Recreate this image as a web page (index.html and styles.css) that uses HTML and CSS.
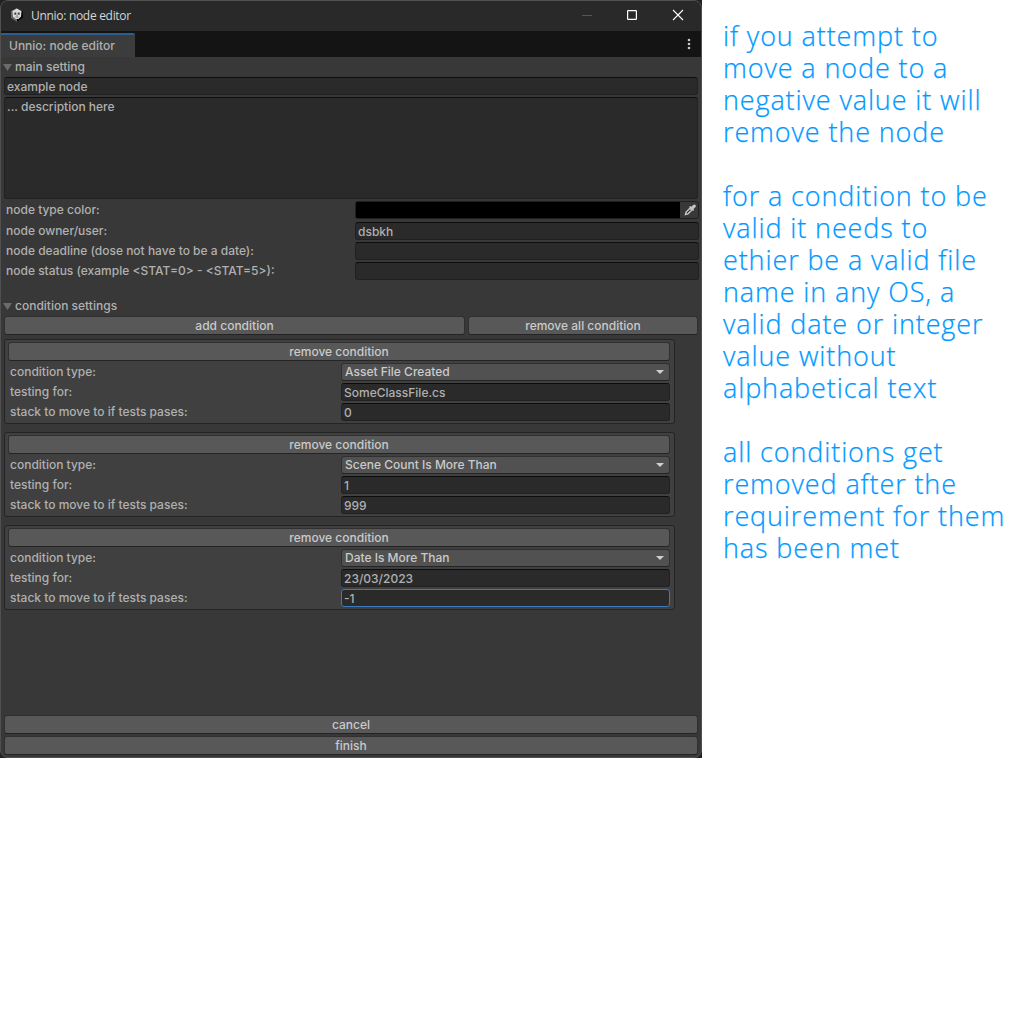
FILE: index.html
```html
<!DOCTYPE html>
<html lang="en">
<head>
<meta charset="utf-8">
<title>Unnio: node editor</title>
<link rel="stylesheet" href="styles.css">
</head>
<body>
<main class="page">
<section class="window">
  <header class="titlebar">
    <svg class="app-icon" width="14" height="16" viewBox="0 0 14 16"><path d="M7 1l6 3v7l-6 4-6-4V4z" fill="#666"/><path d="M7 1l6 3v7l-6 4z" fill="#080808"/><path d="M2.500 4L7 1.500 11.500 4 11 9.500 8.500 12h-3L3 9.500z" fill="#ddd"/><path d="M4.300 5.500h2v2.200h-2zM7.700 5.500h2v2.200h-2z" fill="#444"/><path d="M5.500 10h3M7 8v1" stroke="#555" stroke-width=".8"/></svg>
    <h1 class="title">Unnio: node editor</h1>
    <svg class="controls" width="104" height="12" viewBox="0 0 104 12" fill="none"><path d="M0 6.500h10" stroke="#555"/><rect x="45.600" y="1.600" width="8.800" height="8.800" rx=".6" stroke="#fff" stroke-width="1.200"/><path d="M91 1l10 10M101 1L91 11" stroke="#fff" stroke-width="1.100"/></svg>
  </header>
  <nav class="tabs">
    <div class="tab">Unnio: node editor</div>
    <svg class="kebab" width="4" height="12" viewBox="0 0 4 12" fill="#c8c8c8"><circle cx="2" cy="2" r="1.300"/><circle cx="2" cy="6" r="1.300"/><circle cx="2" cy="10" r="1.300"/></svg>
  </nav>
  <div class="content">
    <h2 class="foldout"><span class="triangle"></span>main setting</h2>
    <div class="field name">example node</div>
    <div class="field description">... description here</div>
    <div class="settings">
      <div class="label">node type color:</div>
      <div class="color-field"><span class="swatch"></span><svg width="12" height="12" viewBox="0 0 12 12"><path d="M1.500 10.500l.6-2.500L6 4.200l1.800 1.800L4 9.800z" fill="none" stroke="#c4c4c4" stroke-width="1.400"/><path d="M5 3l1.300-1 1 .8L9 1.200Q10.300 0 11.400 1t-.3 2.500L9.500 5l.7.900-1.200 1.200z" fill="#c4c4c4"/></svg></div>
      <div class="label">node owner/user:</div><div class="field">dsbkh</div>
      <div class="label">node deadline (dose not have to be a date):</div><div class="field"></div>
      <div class="label">node status (example &lt;STAT=0&gt; - &lt;STAT=5&gt;):</div><div class="field"></div>
    </div>
    <h2 class="foldout"><span class="triangle"></span>condition settings</h2>
    <div class="actions"><div class="button">add condition</div><div class="button">remove all condition</div></div>
    <div class="conditions">
      <div class="condition">
        <div class="button">remove condition</div>
        <div class="label">condition type:</div><div class="dropdown">Asset File Created</div>
        <div class="label">testing for:</div><div class="field">SomeClassFile.cs</div>
        <div class="label">stack to move to if tests pases:</div><div class="field">0</div>
      </div>
      <div class="condition">
        <div class="button">remove condition</div>
        <div class="label">condition type:</div><div class="dropdown">Scene Count Is More Than</div>
        <div class="label">testing for:</div><div class="field">1</div>
        <div class="label">stack to move to if tests pases:</div><div class="field">999</div>
      </div>
      <div class="condition">
        <div class="button">remove condition</div>
        <div class="label">condition type:</div><div class="dropdown">Date Is More Than</div>
        <div class="label">testing for:</div><div class="field">23/03/2023</div>
        <div class="label">stack to move to if tests pases:</div><div class="field focused">-1</div>
      </div>
    </div>
    <footer class="footer"><div class="button">cancel</div><div class="button">finish</div></footer>
  </div>
</section>
<aside class="notes">
  <p>if you attempt to<br>move a node to a<br>negative value it will<br>remove the node</p>
  <p>for a condition to be<br>valid it needs to<br>ethier be a valid file<br>name in any OS, a<br>valid date or integer<br>value without<br>alphabetical text</p>
  <p>all conditions get<br>removed after the<br>requirement for them<br>has been met</p>
</aside>
</main>
</body>
</html>
```
FILE: styles.css
```css
* { box-sizing: border-box; }
body { margin: 0; background: #fff; }
.page { display: flex; align-items: flex-start; width: 1032px; height: 1032px; }
.window {
  display: flex; flex-direction: column; flex: none;
  width: 702px; height: 758px;
  border: 1px solid #505050; border-radius: 8px;
  background: #383838; color: #b0b0b0; overflow: hidden;
  font: 500 12px/18px Inter, sans-serif;
  box-shadow: 0 0 0 8px #222;
  clip-path: inset(0);
}
.titlebar { display: flex; align-items: center; height: 30px; flex: none; padding: 0 15px 0 9px; background: #292929; }
.app-icon { margin-top: -2px; }
.title { flex: 1; margin: 0 0 0 7px; font: 12px/18px "Open Sans", sans-serif; letter-spacing: -.3px; color: #d5d5d5; }
.controls { margin-top: -2px; }
.tabs { display: flex; align-items: center; justify-content: space-between; height: 26px; flex: none; padding-right: 10px; background: #141414; }
.tab { width: 134px; height: 24px; margin-top: 2px; padding: 2px 8px; border-top: 2px solid #2c5d8f; border-radius: 0 2px 0 0; background: #3c3c3c; }
.content { display: flex; flex-direction: column; flex: 1; padding: 0 2px 2px 3px; }
.foldout { display: flex; align-items: center; height: 20px; margin: 0; font: inherit; }
.triangle { width: 9px; height: 7px; margin: 1px 3px 0 -1px; background: #6b6b6b; clip-path: polygon(0 0, 100% 0, 50% 100%); }
.field { height: 18px; padding: 0 2px; border: 1px solid #212121; border-top-color: #0d0d0d; border-radius: 3px; background: #2a2a2a; white-space: pre; }
.name, .description { width: 694px; }
.name { margin-bottom: 2px; }
.description { height: 102px; }
.settings { display: grid; grid-template-columns: 349px 344px; grid-template-rows: 19px 18px 18px 18px; row-gap: 2px; margin: 2px 0 16px 2px; }
.color-field { display: flex; align-items: center; gap: 4px; height: 18px; border: 1px solid #212121; border-radius: 3px; }
.swatch { width: 324px; height: 16px; background: #000; }
.button { height: 19px; line-height: 18px; text-align: center; border: 1px solid #303030; border-bottom-color: #242424; border-radius: 3px; background: #585858; color: #cacaca; }
.actions { display: grid; grid-template-columns: 461px 230px; gap: 3px; margin-bottom: 4px; }
.conditions { display: flex; flex-direction: column; gap: 8px; width: 671px; }
.condition { display: grid; grid-template-columns: 333px 329px; grid-template-rows: 19px 18px 18px 18px; row-gap: 2px; height: 85px; padding: 2px 3px; border: 1px solid #242424; border-radius: 3px; background: #404040; }
.condition .button { grid-column: 1 / -1; }
.condition .label { padding-left: 2px; }
.dropdown { display: flex; align-items: center; justify-content: space-between; height: 18px; padding: 0 5px 0 3px; border: 1px solid #303030; border-bottom-color: #242424; border-radius: 3px; background: #515151; color: #cacaca; }
.dropdown::after { content: ""; width: 8px; height: 4px; background: #d0d0d0; clip-path: polygon(0 0, 100% 0, 50% 100%); }
.focused { border-color: #3a79bb; }
.footer { display: grid; gap: 2px; width: 694px; margin-top: auto; }
.notes { padding: 20px 0 0 21px; color: #0099ff; font: 300 27px/32px "Open Sans", sans-serif; letter-spacing: .88px; -webkit-text-stroke: .25px #0099ff; white-space: nowrap; }
.notes p { margin: 0 0 32px; }
```
